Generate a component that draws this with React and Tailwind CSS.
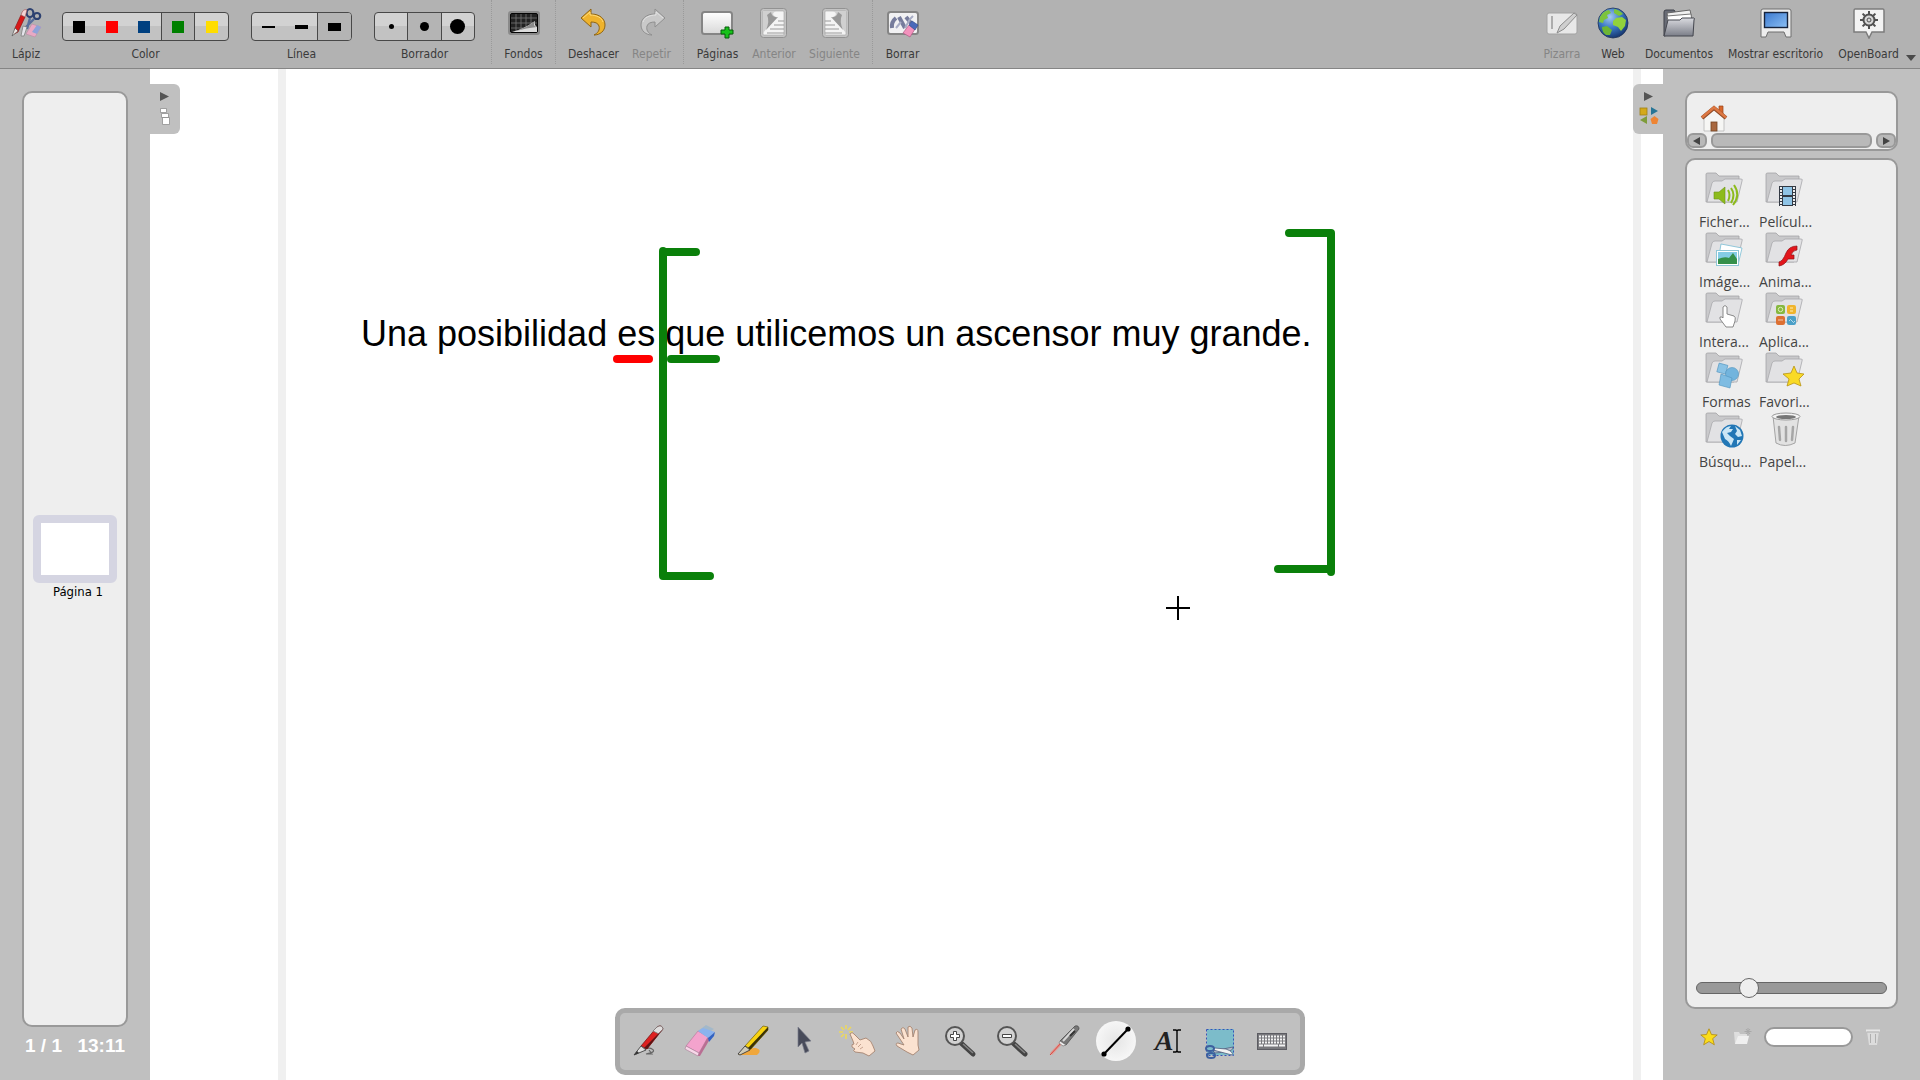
import { useState } from 'react';

/* ---------- toolbar icons ---------- */

function PencilCaseIcon() {
    return (
        <svg width="32" height="32" viewBox="0 0 32 32" fill="none">
            <path d="M20 11 L17 22 M24 12 L13 23" stroke="#5a6f9c" strokeWidth="2.4" />
            <ellipse cx="20" cy="6" rx="3.4" ry="4" stroke="#2d4170" strokeWidth="2.2" />
            <ellipse cx="27" cy="9" rx="3.2" ry="3" stroke="#2d4170" strokeWidth="2.2" />
            <path d="M22 17 L31 20 L25 30 L16 27 Z" fill="#e9a9c4" stroke="#b98ba4" strokeWidth=".6" />
            <path d="M27 18 L31 20 L27 27 L22 25 Z" fill="#8ea3d8" />
            <path d="M11 8 L15 10 L8 25 L4 27 L5 21 Z" fill="#d81818" stroke="#8d1717" strokeWidth=".7" />
            <path d="M11 8 Q13 1 17 3 L15 10 Z" fill="#f2d4d4" stroke="#9c4b4b" strokeWidth=".6" />
            <path d="M5 21 L8 24 L2 29 Z" fill="#ece8e4" stroke="#555" strokeWidth=".7" />
            <path d="M13 19 L17 20 L14 29 L11 29 Z" fill="#e4e4ea" stroke="#777" strokeWidth=".7" />
        </svg>
    );
}

function BackgroundIcon() {
    return (
        <svg width="32" height="32" viewBox="0 0 32 32" fill="none">
            <rect x="0" y="4" width="32" height="24" rx="3" fill="#8a8a8a" />
            <rect x="2.500" y="6.500" width="27" height="19" rx="1.500" fill="#222" stroke="#050505" />
            <path d="M8 7v18M13 7v18M18 7v18M23 7v18M3 11h26M3 16h26M3 21h26" stroke="#777" strokeWidth=".8" />
            <path d="M4 25 Q16 22 27 14 Q26 18 29 20 V25 Z" fill="#dcdcdc" />
            <path d="M8 24 Q18 21 27 14 Q24 19 29 20 Q18 21 8 24Z" fill="#8b8b8b" />
        </svg>
    );
}

function UndoIcon({ redo = false }) {
    const fill = redo ? '#c9c9c9' : '#efb32d';
    const stroke = redo ? '#8f8f8f' : '#8e6414';
    return (
        <svg width="32" height="32" viewBox="0 0 32 32" className={redo ? '-scale-x-100' : ''}>
            <path
                d="M3 11 L13 2 V7 C22 7 27 12 27 18 C27 24 22 28 16 28 C20 26 22 23 21 19 C20 16 17 15 13 15 V20 Z"
                fill={fill}
                stroke={stroke}
                strokeLinejoin="round"
            />
            <path d="M5 11 L12 5 V8 C19 8 24 11 25 15" fill="none" stroke={redo ? '#e2e2e2' : '#ffdc7c'} />
        </svg>
    );
}

function AddPageIcon() {
    return (
        <svg width="34" height="32" viewBox="0 0 34 32">
            <defs>
                <linearGradient id="page" x2="0" y2="1">
                    <stop stopColor="#fff" />
                    <stop offset="1" stopColor="#d8d8d8" />
                </linearGradient>
            </defs>
            <rect x="1" y="5" width="30" height="22" rx="2.500" fill="url(#page)" stroke="#858585" strokeWidth="2" />
            <path d="M24 20h4v3h4v4h-4v4h-4v-4h-4v-4h4z" fill="#17c31a" stroke="#075d0a" />
        </svg>
    );
}

function TurnPageIcon({ next = false }) {
    return (
        <svg width="32" height="32" viewBox="0 0 32 32" className={next ? '-scale-x-100' : ''}>
            <rect x="2.500" y="1.500" width="26" height="29" rx="3" fill="#c4c4c4" stroke="#929292" />
            <rect x="5" y="4" width="21" height="24" rx="1" fill="#f4f4f4" stroke="#a4a4a4" strokeWidth=".6" />
            <path d="M5 4 H18 Q12 7 18 10 L5 26 Z" fill="#d0d0d0" />
            <path d="M13 5 Q14 11 20 10 L8 23 Q12 14 9 8Z" fill="#989898" />
            <path d="M20 14h6M16 18h10M12 22h14M9 26h17" stroke="#9a9a9a" strokeWidth="1" />
        </svg>
    );
}

function ClearIcon() {
    return (
        <svg width="34" height="32" viewBox="0 0 34 32" fill="none">
            <rect x="2" y="5" width="30" height="22" rx="2.500" fill="#f1f1f3" stroke="#858585" strokeWidth="2" />
            <path d="M6 21 Q5 15 10 11 M13 10 L19 21 M20 10 L25 16" stroke="#767c9c" strokeWidth="4" />
            <path d="M10 21 L15 15 M19 21 L24 12 L27 9" stroke="#a7acc5" strokeWidth="2" />
            <path d="M23 18 L29 22 L24 30 L17 26 Z" fill="#f392bd" stroke="#ab5c84" strokeWidth=".7" />
            <path d="M26 14 L32 18 L29 23 L23 18 Z" fill="#4a69ba" stroke="#37508f" strokeWidth=".7" />
        </svg>
    );
}

function BoardIcon() {
    return (
        <svg width="32" height="32" viewBox="0 0 32 32" fill="none">
            <rect x="1" y="6" width="30" height="21" rx="2" fill="#e8e8e8" stroke="#a2a2a2" />
            <path d="M6 9v13" stroke="#9a9a9a" strokeWidth="1.500" />
            <path d="M28 6 L31 8 L18 22 L11 26 L14 19 Z" fill="#cfcfcf" stroke="#8c8c8c" />
        </svg>
    );
}

function WebIcon() {
    return (
        <svg width="32" height="32" viewBox="0 0 32 32">
            <defs>
                <radialGradient id="globe" cx=".4" cy=".3" r=".75">
                    <stop stopColor="#a5caf0" />
                    <stop offset=".5" stopColor="#3a78c4" />
                    <stop offset="1" stopColor="#132f66" />
                </radialGradient>
            </defs>
            <circle cx="16" cy="16" r="15" fill="url(#globe)" stroke="#1d3157" strokeWidth=".8" />
            <path d="M3 10 Q6 4 12 3 L14 6 L10 8 L11 11 L7 13 L6 16 L2 15 Z" fill="#7cc43c" />
            <path d="M17 2 Q23 3 26 7 L22 9 L17 6 Z" fill="#7cc43c" />
            <path d="M19 11 L25 10 L29 13 L28 19 L24 24 L21 20 L16 18 L16 14 Z" fill="#91d23c" />
            <path d="M5 20 L10 19 L15 23 L13 28 L9 28 Q5 25 5 20 Z" fill="#6db535" />
        </svg>
    );
}

function DocumentsIcon() {
    return (
        <svg width="34" height="32" viewBox="0 0 34 32">
            <defs>
                <linearGradient id="docs" x2="0" y2="1">
                    <stop stopColor="#dadbe0" />
                    <stop offset="1" stopColor="#7b7e88" />
                </linearGradient>
            </defs>
            <path d="M2 29 V5 Q2 3 4 3 H12 L14 6 H25 V12 L6 28 Z" fill="#696c76" stroke="#3e4048" />
            <path d="M5 6 L28 3 L30 12 H6 Z" fill="#f0f0f0" stroke="#666" />
            <path d="M5 9 L29 7 L30 14 H6 Z" fill="#fff" stroke="#777" />
            <path d="M2 29 L6 13 H18 L20 11 H32 Q33 11 32 13 L31 29 Z" fill="url(#docs)" stroke="#44464e" />
        </svg>
    );
}

function DesktopIcon() {
    return (
        <svg width="34" height="32" viewBox="0 0 34 32">
            <defs>
                <linearGradient id="desk" x2="1" y2="1">
                    <stop stopColor="#3a78cf" />
                    <stop offset="1" stopColor="#8cc0f4" />
                </linearGradient>
            </defs>
            <path
                d="M4 2 H30 Q32 2 32 4 V30 H27 L25 25 H9 L7 30 H2 V4 Q2 2 4 2 Z"
                fill="#ededed"
                stroke="#6f6f6f"
            />
            <rect x="5.500" y="5.500" width="23" height="15" fill="url(#desk)" stroke="#16233c" strokeWidth="1.400" />
        </svg>
    );
}

function OpenBoardIcon() {
    return (
        <svg width="34" height="32" viewBox="0 0 34 32" fill="none">
            <path d="M3 2 H31 Q32 2 32 4 V25 H20 L17 31 L14 25 H2 V4 Q2 2 3 2 Z" fill="#f3f3f3" stroke="#7c7c7c" strokeWidth="1.500" />
            <circle cx="17" cy="13" r="5.500" stroke="#505050" strokeWidth="2" fill="#d7d7d7" />
            <circle cx="17" cy="13" r="2" stroke="#505050" />
            <path
                d="M17 4v3M17 19v3M8 13h3M23 13h3M10.600 6.600l2.200 2.200M21.200 17.200l2.200 2.200M23.400 6.600l-2.200 2.200M12.800 17.200l-2.200 2.200"
                stroke="#505050"
                strokeWidth="2"
            />
        </svg>
    );
}

/* ---------- palette icons ---------- */

const paletteIcons = {
    pen: (
        <>
            <path d="M4 29 Q16 21 20 24 Q25 27 14 29 H20 L17 25" stroke="#666" strokeWidth="1.200" fill="none" />
            <path d="M25 2 Q30 -1 31 4 L15 24 L9 21 Z" fill="#dd2020" stroke="#7c1919" strokeWidth=".8" />
            <path d="M25 2 Q30 -1 31 4 L27 9 L21 6 Z" fill="#e0dede" stroke="#777" strokeWidth=".8" />
            <path d="M31 4 L15 24 L12 23 Z" fill="#5d1414" />
            <path d="M9 21 L14 25 L2 30 Z" fill="#dedede" stroke="#444" strokeWidth=".9" />
            <path d="M2 30 L5 26 L7 28 Z" fill="#333" />
        </>
    ),
    eraser: (
        <>
            <path d="M14 6 L22 0 L30 4 L22 9 Z" fill="#8fb3cf" opacity=".6" />
            <path d="M14 6 L24 12 L15 28 L2 21 Z" fill="#f3a3cd" stroke="#b27397" strokeWidth=".6" />
            <path d="M2 21 L15 28 L14 31 L1 24 Z" fill="#f7d7e8" stroke="#a87c95" strokeWidth=".6" />
            <path d="M15 28 L24 12 L26 14 L16 31 H14 Z" fill="#b96e93" />
            <path d="M14 6 L19 3 L31 7 L24 13 Z" fill="#8bb3ee" />
            <path d="M24 13 L31 7 L30 11 L25 17 Z" fill="#3263c4" />
        </>
    ),
    marker: (
        <>
            <path d="M3 29 Q13 22 20 23 Q27 25 21 30 H2 Z" fill="#f0a73c" />
            <path d="M27 1 L32 2 L32 5 L15 24 L9 21 Z" fill="#f8d312" stroke="#705f0a" strokeWidth=".7" />
            <path d="M32 2 V5 L14 25 L12 23 Z" fill="#3a3207" />
            <path d="M9 21 L14 25 L4 30 L2 29 Z" fill="#cfcbb8" stroke="#3b3b3b" strokeWidth=".9" />
        </>
    ),
    select: <path d="M10 2 L23 16 L17 17 L21 26 L17 28 L14 18 L10 22 Z" fill="#484b5a" stroke="#7c7f8c" strokeWidth=".7" />,
    interact: (
        <>
            <path d="M6 0v4M6 9v5M-1 7h4M9 7h4M1 2l3 3M11 2l-3 3M1 12l3-3" stroke="#ecd75e" strokeWidth="1.600" />
            <path
                d="M10 9 Q12 6 14 9 L20 15 L26 13 Q32 16 33 21 L35 26 L29 31 L23 28 L15 27 Q12 25 15 24 L12 22 Q11 19 14 19 L13 16 Z"
                fill="#fbe2d0"
                stroke="#a58472"
                strokeWidth=".9"
            />
            <path d="M18 17l-2 3M21 19l-3 3M23 22l-3 2" stroke="#b9927c" strokeWidth=".8" fill="none" />
        </>
    ),
    scroll: (
        <path
            d="M4 8 Q5 5 8 8 L12 14 L9 4 Q11 1 13 4 L16 12 L16 2 Q18 0 20 3 L21 12 L23 5 Q26 3 26 7 L26 20 L27 25 L21 30 L15 27 L5 21 Q3 18 6 18 L12 20 Z"
            fill="#fbe2d0"
            stroke="#a58472"
            strokeWidth=".9"
            strokeLinejoin="round"
        />
    ),
    zoomIn: (
        <>
            <path d="M17 18 L29 29" stroke="#444" strokeWidth="5" strokeLinecap="round" />
            <path d="M19 19 L29 28" stroke="#858585" strokeWidth="1.500" />
            <circle cx="11" cy="11" r="9" fill="#d2d2d2" stroke="#555" strokeWidth="2" />
            <path d="M9.500 6.500h3v3h3v3h-3v3h-3v-3h-3v-3h3z" fill="#fff" stroke="#333" strokeWidth=".9" />
        </>
    ),
    zoomOut: (
        <>
            <path d="M17 18 L29 29" stroke="#444" strokeWidth="5" strokeLinecap="round" />
            <path d="M19 19 L29 28" stroke="#858585" strokeWidth="1.500" />
            <circle cx="11" cy="11" r="9" fill="#d2d2d2" stroke="#555" strokeWidth="2" />
            <path d="M6.500 9.500h9v3h-9z" fill="#fff" stroke="#333" strokeWidth=".9" />
        </>
    ),
    laser: (
        <>
            <path d="M3 29 L15 16" stroke="#ee8a80" strokeWidth="3" opacity=".7" />
            <path d="M2 30 L14 17" stroke="#d9463f" strokeWidth="1" />
            <path d="M27 1 Q31 0 31 4 L18 20 L12 16 Z" fill="#777" stroke="#4e4e4e" strokeWidth=".8" />
            <path d="M26 4 L15 16" stroke="#d7d7d7" strokeWidth="2" />
            <path d="M12 16 L18 20 L15 21 L11 18 Z" fill="#efefef" stroke="#777" strokeWidth=".7" />
            <path d="M22 11 L27 6" stroke="#333" strokeWidth="2" />
        </>
    ),
    line: (
        <>
            <path d="M4 29 L28 4" stroke="#000" strokeWidth="2" />
            <circle cx="4" cy="29" r="2.600" />
            <circle cx="28" cy="4" r="2.600" />
        </>
    ),
    capture: (
        <>
            <rect x="3" y="4" width="27" height="26" fill="#7cbcca" />
            <rect x="2.500" y="4.500" width="27" height="26" fill="none" stroke="#3653b8" strokeDasharray="2 2" />
            <path d="M9 26 L29 22 Q29 26 22 27 L11 28 Z" fill="#b3bccb" stroke="#4f607f" strokeWidth=".8" />
            <path d="M9 25 L28 30 Q30 27 22 24 L11 23 Z" fill="#f2f2f2" stroke="#4f607f" strokeWidth=".8" />
            <ellipse cx="6" cy="23.500" rx="4" ry="2.600" fill="none" stroke="#3d5f9e" strokeWidth="2" />
            <ellipse cx="7" cy="30.500" rx="4" ry="2.600" fill="none" stroke="#3d5f9e" strokeWidth="2" />
        </>
    ),
    keyboard: (
        <>
            <rect x="1.500" y="8.500" width="29" height="16" fill="#78787c" stroke="#5c5c62" />
            <path d="M3 11.500h26M3 14.500h26M3 17.500h26" stroke="#f3f3f3" strokeWidth="2" strokeDasharray="2 1" />
            <path d="M3 20.500h4M8 20.500h14M23 20.500h6" stroke="#f3f3f3" strokeWidth="2" />
        </>
    ),
};

const tools = [
    ['pen', 'Lápiz'],
    ['eraser', 'Borrador'],
    ['marker', 'Marcador'],
    ['select', 'Seleccionar'],
    ['interact', 'Interactuar'],
    ['scroll', 'Desplazar'],
    ['zoomIn', 'Acercar'],
    ['zoomOut', 'Alejar'],
    ['laser', 'Puntero láser'],
    ['line', 'Línea'],
    ['text', 'Texto'],
    ['capture', 'Capturar'],
    ['keyboard', 'Teclado'],
];

/* ---------- library icons ---------- */

function Star({ className }) {
    return (
        <svg viewBox="0 0 22 22" className={className}>
            <path
                d="M11 1 L14 8 L21 8.500 L15.500 13 L17.500 20.500 L11 16.500 L4.500 20.500 L6.500 13 L1 8.500 L8 8 Z"
                fill="#fbdd1c"
                stroke="#b08a12"
                strokeWidth="1"
                strokeLinejoin="round"
            />
        </svg>
    );
}

const badges = {
    audio: (
        <>
            <path d="M10 20h5l6-5v17l-6-5h-5z" fill="#8dbb1c" stroke="#6b941a" strokeWidth=".6" />
            <path d="M24 18q3 5 0 11M27 16q5 7 0 15M30 13q7 10-1 20" stroke="#8dbb1c" strokeWidth="2" fill="none" />
        </>
    ),
    video: (
        <>
            <rect x="15" y="14" width="17" height="20" fill="#333a44" />
            <path d="M19 15h9v8h-9zM19 25h9v8h-9z" fill="#8fc4e6" />
            <path d="M17 15v19M30 15v19" stroke="#eee" strokeWidth="2" strokeDasharray="2 1" />
        </>
    ),
    image: (
        <>
            <path d="M17 12 L38 16 L34 33 L14 30 Z" fill="#fff" stroke="#79bcd3" strokeWidth=".8" />
            <rect x="12.500" y="18.500" width="22" height="15" fill="#fff" stroke="#8fc6d6" />
            <rect x="14" y="20" width="19" height="12" fill="#85cce5" />
            <path d="M14 27 Q21 24 25 26 L29 21 L33 27 V32 H14 Z" fill="#35904a" />
        </>
    ),
    flash: (
        <path
            d="M33 14 Q25 14 22 21 Q19 29 15 30 V34 Q21 33 24 27 H30 V23 H27 Q29 18 33 18 Z"
            fill="#e2151b"
            stroke="#8f1115"
            strokeWidth=".7"
            strokeLinejoin="round"
        />
    ),
    interact: (
        <path
            d="M19 15 Q21 12 23 15 V22 L30 24 Q32 25 31 29 L29 35 H22 L16 27 Q15 24 18 25 L19 26 Z"
            fill="#fff"
            stroke="#7d7d7d"
            strokeWidth=".9"
        />
    ),
    apps: (
        <>
            <rect x="12" y="13" width="9" height="9" rx="2" fill="#86b83f" />
            <rect x="23" y="13" width="9" height="9" rx="2" fill="#f0b42c" />
            <rect x="12" y="24" width="9" height="9" rx="2" fill="#dd7032" />
            <rect x="23" y="24" width="9" height="9" rx="2" fill="#4ba0c8" />
            <circle cx="16.500" cy="17.500" r="2.200" fill="none" stroke="#dff0b8" />
            <path d="M26 16h3M26 19h3" stroke="#fff0b5" />
            <path d="M14 28h5M25 29q1.500-3 3 0t3 0" stroke="#ffffff99" fill="none" />
        </>
    ),
    shapes: (
        <>
            <rect x="14" y="12" width="9" height="9" fill="#8bc3e5" stroke="#4f93bd" strokeWidth=".6" transform="rotate(15 18 16)" />
            <circle cx="28" cy="22" r="6.500" fill="#72b4dd" stroke="#4f93bd" strokeWidth=".6" />
            <path d="M17 22 L28 26 L26 36 L15 33 Z" fill="#7ebce2" stroke="#4f93bd" strokeWidth=".6" />
        </>
    ),
    favorite: (
        <path
            d="M30 14 L33 21 L40 22 L35 27 L37 34 L30 31 L23 34 L25 27 L19 22 L27 21 Z"
            fill="#f9da25"
            stroke="#b79314"
            strokeWidth=".8"
        />
    ),
    web: (
        <>
            <circle cx="28" cy="24" r="11.500" fill="#2277b6" />
            <path d="M18 20 Q22 14 27 14 L25 17 L29 17 L27 20 L23 21 L26 24 L30 27 L27 34 Q25 29 21 27 Z" fill="#cbe6f5" />
            <path d="M31 14 L36 18 L38 24 L34 25 L31 22 L33 19 Z M33 28 L37 28 L33 33 Z" fill="#cbe6f5" />
        </>
    ),
};

function FolderIcon({ kind }) {
    if (kind === 'trash') {
        return (
            <svg width="42" height="38" viewBox="0 0 42 38">
                <path d="M9 4 L12 31 Q21 36 31 31 L35 4 Z" fill="#e2e2e2" stroke="#a4a4a4" />
                <ellipse cx="22" cy="4.500" rx="14" ry="3.500" fill="#f4f4f4" stroke="#999" />
                <ellipse cx="22" cy="5" rx="10" ry="2" fill="#777" />
                <path d="M15 15l1 13M22 15v14M29 15l-1 13" stroke="#a6a6a6" strokeWidth="2.500" strokeLinecap="round" />
            </svg>
        );
    }
    return (
        <svg width="42" height="38" viewBox="0 0 42 38">
            <path d="M2 30 V2 Q2 1 4 1 H12 L15 4 H35 V10 L30 30 Z" fill="#c9c9cb" stroke="#a3a3a6" strokeWidth=".8" />
            <path d="M3 30 L8 11 Q9 9 11 9 H18 L21 7 H37 Q39 7 38 9 L33 30 Z" fill="#e2e2e4" stroke="#a8a8ac" strokeWidth=".8" />
            {badges[kind]}
        </svg>
    );
}

const folders = [
    ['audio', 'Ficher...'],
    ['video', 'Películ...'],
    ['image', 'Imáge...'],
    ['flash', 'Anima...'],
    ['interact', 'Intera...'],
    ['apps', 'Aplica...'],
    ['shapes', 'Formas'],
    ['favorite', 'Favori...'],
    ['web', 'Búsqu...'],
    ['trash', 'Papel...'],
];

/* ---------- building blocks ---------- */

function ToolButton({ icon, label, width, disabled = false }) {
    return (
        <button
            type="button"
            disabled={disabled}
            className={`flex flex-col items-center gap-[7px] pt-[7px] whitespace-nowrap text-[#3a3a3a] disabled:text-[#858585] ${width}`}
        >
            <span className="flex h-8 items-center justify-center">{icon}</span>
            <span className="leading-4">{label}</span>
        </button>
    );
}

function Separator() {
    return <div className="h-16 w-px shrink-0 border-l border-dotted border-[#9a9a9a]" />;
}

function Segmented({ label, options, initial, width }) {
    const [active, setActive] = useState(initial);
    return (
        <div role="group" aria-label={label} className={`flex flex-col items-center gap-[5px] pt-3 ${width}`}>
            <div className="flex h-[29px] w-full overflow-hidden rounded border border-[#484848] bg-linear-to-b from-[#d2d2d2] from-50% to-[#c2c2c2] to-50%">
                {options.map((option, i) => (
                    <button
                        key={option.name}
                        type="button"
                        aria-label={option.name}
                        aria-pressed={i === active}
                        onClick={() => setActive(i)}
                        className={`flex flex-1 items-center justify-center border-[#484848] ${
                            i === active ? 'bg-[#b4b4b4]' : ''
                        } ${i > 0 && (i === active || i === active + 1) ? 'border-l' : ''}`}
                    >
                        <span className={option.mark} />
                    </button>
                ))}
            </div>
            <span className="leading-4 text-[#3a3a3a]">{label}</span>
        </div>
    );
}

const colors = [
    { name: 'Negro', mark: 'size-3 bg-black' },
    { name: 'Rojo', mark: 'size-3 bg-[#ff0000]' },
    { name: 'Azul', mark: 'size-3 bg-[#004080]' },
    { name: 'Verde', mark: 'size-3 bg-[#008000]' },
    { name: 'Amarillo', mark: 'size-3 bg-[#ffdd00]' },
];

const lines = [
    { name: 'Fina', mark: 'h-[2px] w-[13px] bg-black' },
    { name: 'Media', mark: 'h-1 w-[13px] bg-black' },
    { name: 'Gruesa', mark: 'h-2 w-[13px] bg-black' },
];

const erasers = [
    { name: 'Pequeño', mark: 'size-[5px] rounded-full bg-black' },
    { name: 'Mediano', mark: 'size-[9px] rounded-full bg-black' },
    { name: 'Grande', mark: 'size-[15px] rounded-full bg-black' },
];

function Toolbar() {
    return (
        <header className="flex h-[69px] shrink-0 border-b border-[#858585] bg-[#b2b2b2] font-['DejaVu_Sans_Condensed','DejaVu_Sans',sans-serif] text-[12px]">
            <ToolButton icon={<PencilCaseIcon />} label="Lápiz" width="w-[52px]" />
            <div className="ml-[10px] flex gap-[22px]">
                <Segmented label="Color" options={colors} initial={3} width="w-[167px]" />
                <Segmented label="Línea" options={lines} initial={2} width="w-[101px]" />
                <Segmented label="Borrador" options={erasers} initial={1} width="w-[101px]" />
            </div>
            <div className="ml-4 flex gap-[11px]">
                <Separator />
                <ToolButton icon={<BackgroundIcon />} label="Fondos" width="w-[41px]" />
                <Separator />
                <ToolButton icon={<UndoIcon />} label="Deshacer" width="w-[53px]" />
                <ToolButton icon={<UndoIcon redo />} label="Repetir" width="w-[41px]" disabled />
                <Separator />
                <ToolButton icon={<AddPageIcon />} label="Páginas" width="w-[45px]" />
                <ToolButton icon={<TurnPageIcon />} label="Anterior" width="w-[46px]" disabled />
                <ToolButton icon={<TurnPageIcon next />} label="Siguiente" width="w-[53px]" disabled />
                <Separator />
                <ToolButton icon={<ClearIcon />} label="Borrar" width="w-[37px]" />
            </div>
            <div className="ml-auto flex gap-[11px]">
                <ToolButton icon={<BoardIcon />} label="Pizarra" width="w-[40px]" disabled />
                <ToolButton icon={<WebIcon />} label="Web" width="w-[40px]" />
                <ToolButton icon={<DocumentsIcon />} label="Documentos" width="w-[70px]" />
                <ToolButton icon={<DesktopIcon />} label="Mostrar escritorio" width="w-[101px]" />
                <ToolButton icon={<OpenBoardIcon />} label="OpenBoard" width="w-[63px]" />
            </div>
            <button type="button" aria-label="Más" className="flex w-5 items-end pb-[7px] pl-[6px]">
                <svg width="10" height="6" viewBox="0 0 10 6">
                    <path d="M0 0h10L5 6z" fill="#4a4a4a" />
                </svg>
            </button>
        </header>
    );
}

function PagesPanel() {
    return (
        <aside className="flex w-[150px] shrink-0 flex-col bg-[#c0c0c0] px-[22px] pt-[22px]">
            <div className="flex flex-1 flex-col items-center justify-center rounded-[10px] border-2 border-[#999] bg-[#eee] pb-1">
                <button type="button" className="flex flex-col items-center gap-px">
                    <span className="h-[68px] w-[84px] rounded-md border-8 border-[#d5d5e2] bg-white" />
                    <span className="pl-[6px] font-['DejaVu_Sans_Condensed','DejaVu_Sans',sans-serif] text-[13px] leading-4 text-black">
                        Página 1
                    </span>
                </button>
            </div>
            <div className="flex h-[53px] justify-between px-[3px] pt-[7px] font-['Liberation_Sans',sans-serif] text-[19px] leading-6 font-bold whitespace-nowrap text-white">
                <span>1 / 1</span>
                <span>13:11</span>
            </div>
        </aside>
    );
}

function Canvas() {
    return (
        <main className="relative flex-1 overflow-hidden bg-white">
            <div className="absolute inset-y-0 left-32 w-2 bg-[#f0f0f0]" />
            <div className="absolute inset-y-0 right-[22px] w-2 bg-[#f0f0f0]" />
            <p className="absolute top-[243px] left-[211px] font-['Liberation_Sans',sans-serif] text-[36px] leading-[44px] whitespace-nowrap text-black">
                Una posibilidad es que utilicemos un ascensor muy grande.
            </p>
            <svg className="absolute inset-0 size-full" fill="none" strokeLinecap="round" strokeWidth="8">
                <path d="M467 290h32" stroke="#ff0000" />
                <g stroke="#0a800a">
                    <path d="M521 290h45" />
                    <path d="M513 182v325M513 183h33M513 507h47" />
                    <path d="M1139 164h42M1181 164v339M1128 500h53" />
                </g>
                <path d="M1028 527v24M1016 539h24" stroke="#000" strokeWidth="2" strokeLinecap="butt" />
            </svg>
            <button
                type="button"
                aria-label="Ocultar páginas"
                className="absolute top-[15px] left-0 flex h-[50px] w-[30px] justify-center rounded-r-md bg-[#c0c0c0]"
            >
                <svg width="30" height="50" viewBox="0 0 30 50">
                    <path d="M10 8v9l9-4.500z" fill="#555" />
                    <path d="M10.500 24.500h6v4h-6zM11.500 29.500h7v4h-7zM12.500 33.500h7v7h-7z" fill="#fff" stroke="#8f8f8f" strokeWidth=".8" />
                </svg>
            </button>
            <button
                type="button"
                aria-label="Ocultar biblioteca"
                className="absolute top-[15px] right-0 flex h-[50px] w-[30px] justify-center rounded-l-md bg-[#c0c0c0]"
            >
                <svg width="30" height="50" viewBox="0 0 30 50">
                    <path d="M11 8v9l9-4.500z" fill="#555" />
                    <rect x="7" y="24" width="7" height="7" fill="#d4a919" stroke="#9f8114" strokeWidth=".8" />
                    <path d="M18 23v8l7-4z" fill="#277596" />
                    <path d="M14 32v8l-7-4z" fill="#7e9c3a" />
                    <path d="M21.500 32l4 3-1.500 5h-5l-1.500-5z" fill="#ee8534" />
                </svg>
            </button>
        </main>
    );
}

function ScrollButton({ label, d }) {
    return (
        <button
            type="button"
            aria-label={label}
            className="flex h-[15px] w-5 items-center justify-center rounded-md border-2 border-[#999] bg-[#b9b9b9]"
        >
            <svg width="8" height="8" viewBox="0 0 8 8">
                <path d={d} fill="#444" />
            </svg>
        </button>
    );
}

function LibraryPanel() {
    const [size, setSize] = useState(25);
    return (
        <aside className="flex w-[257px] shrink-0 flex-col bg-[#c0c0c0] px-[22px] pt-[22px]">
            <nav className="flex h-[60px] flex-col justify-between rounded-[10px] border-2 border-[#999] bg-[#eee] pb-px">
                <a href="#inicio" aria-label="Inicio" className="mt-[11px] ml-[13px] block size-7">
                    <svg width="28" height="28" viewBox="0 0 28 28">
                        <path d="M4 13 L14 4 L24 13 V27 H4 Z" fill="#f6f6f4" stroke="#b8b8b8" strokeWidth=".8" />
                        <path d="M19 2h4v8l-4-4z" fill="#d8672c" stroke="#9a4317" strokeWidth=".7" />
                        <path d="M2 14 L14 4 L26 14" fill="none" stroke="#8f4a26" strokeWidth="4" />
                        <path d="M2 13.500 L14 3.500 L26 13.500" fill="none" stroke="#dd7742" strokeWidth="2.600" />
                        <rect x="11" y="18" width="6" height="9" fill="#a8683f" stroke="#744523" strokeWidth=".8" />
                    </svg>
                </a>
                <div className="flex justify-between gap-1">
                    <ScrollButton label="Desplazar a la izquierda" d="M7 0v8L0 4z" />
                    <div className="h-[15px] flex-1 rounded-md border-2 border-[#999] bg-[#b9b9b9]" />
                    <ScrollButton label="Desplazar a la derecha" d="M1 0v8l7-4z" />
                </div>
            </nav>
            <section className="mt-[7px] flex flex-1 flex-col justify-between rounded-[10px] border-2 border-[#999] bg-[#eee] px-[9px]">
                <div className="grid grid-cols-[60px_60px] pt-3 pl-[2px] font-['Open_Sans','Noto_Sans',sans-serif] text-[14px] text-[#444]">
                    {folders.map(([kind, label]) => (
                        <button key={kind} type="button" className="flex h-[60px] flex-col pl-px text-left">
                            <span className="pl-[5px]">
                                <FolderIcon kind={kind} />
                            </span>
                            <span className={`leading-6 whitespace-nowrap ${label === 'Formas' ? 'pl-[3px]' : ''}`}>{label}</span>
                        </button>
                    ))}
                </div>
                <input
                    type="range"
                    aria-label="Tamaño de los iconos"
                    value={size}
                    onChange={(e) => setSize(Number(e.target.value))}
                    className="mb-[13px] h-3 w-full appearance-none rounded-full border border-[#666] bg-[#999] [&::-webkit-slider-thumb]:size-5 [&::-webkit-slider-thumb]:appearance-none [&::-webkit-slider-thumb]:rounded-full [&::-webkit-slider-thumb]:border [&::-webkit-slider-thumb]:border-[#666] [&::-webkit-slider-thumb]:bg-[#eee]"
                />
            </section>
            <div className="flex h-[71px] items-start pt-[18px] pl-[14px]">
                <button type="button" aria-label="Añadir a favoritos" className="flex h-5 w-5 items-center justify-center">
                    <Star className="size-[18px]" />
                </button>
                <button type="button" aria-label="Nueva carpeta" className="ml-3 flex h-5 w-6 items-center justify-center">
                    <svg width="20" height="18" viewBox="0 0 20 18">
                        <path d="M1 4h5l1 2h7v10H2z" fill="#dedede" />
                        <path d="M2 16l3-8h11l-2 8z" fill="#efefef" />
                        <path d="M15 0v7M11.500 3.500h7M13 1l4 5M17 1l-4 5" stroke="#a8a8a8" />
                    </svg>
                </button>
                <input
                    type="text"
                    aria-label="Buscar"
                    className="ml-[9px] h-5 w-[89px] rounded-full border-2 border-[#999] bg-white px-2 text-xs outline-none"
                />
                <button type="button" aria-label="Eliminar" className="ml-[10px] flex h-5 w-5 items-center justify-center">
                    <svg width="16" height="18" viewBox="0 0 16 18">
                        <path d="M2 3l2 14h8l2-14z" fill="#dcdcdc" />
                        <path d="M1 1.500h14v2H1z" fill="#e6e6e6" />
                        <path d="M2 4h12M5.500 6v9M10.500 6v9" stroke="#b0b0b0" />
                    </svg>
                </button>
            </div>
        </aside>
    );
}

function Palette() {
    const [active, setActive] = useState('line');
    return (
        <div className="pointer-events-none absolute inset-x-0 bottom-[5px] flex justify-center">
            <div className="pointer-events-auto flex h-[67px] items-center rounded-[10px] border-[5px] border-[#a9a9a9] bg-[#c0c0c0] px-[2px] pb-[2px]">
                {tools.map(([key, label]) => (
                    <button
                        key={key}
                        type="button"
                        aria-label={label}
                        aria-pressed={active === key}
                        onClick={() => setActive(key)}
                        className="flex h-full w-[52px] items-center justify-center"
                    >
                        <span
                            className={`flex size-10 items-center justify-center rounded-full ${
                                active === key ? 'bg-radial from-[#e6e6e6] to-[#fdfdfd]' : ''
                            }`}
                        >
                            {key === 'text' ? (
                                <span className="flex items-center font-['Liberation_Serif',serif] text-[28px] leading-8 text-[#222]">
                                    <b className="italic">A</b>
                                    <svg width="8" height="24" viewBox="0 0 8 24" fill="none" stroke="#000" strokeWidth="1.400">
                                        <path d="M0 1h3l1 1 1-1h3M4 2v20M0 23h3l1-1 1 1h3" />
                                    </svg>
                                </span>
                            ) : (
                                <svg width="32" height="32" viewBox="0 0 32 32" overflow="visible">
                                    {paletteIcons[key]}
                                </svg>
                            )}
                        </span>
                    </button>
                ))}
            </div>
        </div>
    );
}

export default function App() {
    return (
        <div className="relative flex h-screen flex-col overflow-hidden bg-[#c0c0c0]">
            <Toolbar />
            <div className="flex min-h-0 flex-1">
                <PagesPanel />
                <Canvas />
                <LibraryPanel />
            </div>
            <Palette />
        </div>
    );
}
